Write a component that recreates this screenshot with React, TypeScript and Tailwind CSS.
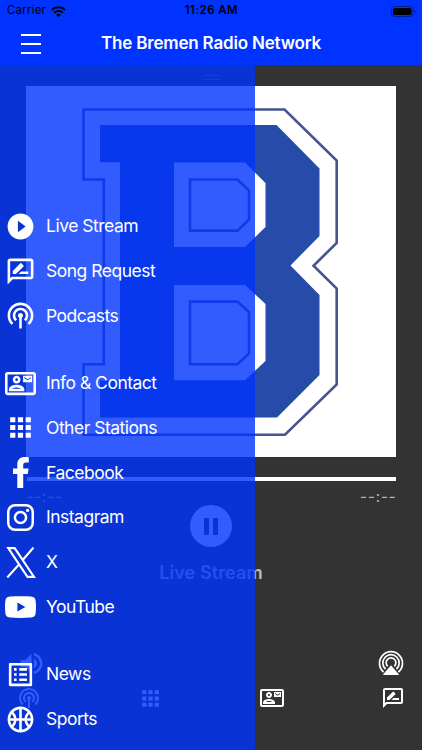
import type { ReactNode } from 'react';
import {
  MdApps,
  MdOutlineContactMail,
  MdOutlineListAlt,
  MdOutlineRateReview,
  MdOutlineSportsBasketball,
  MdPlayCircleFilled,
  MdPodcasts,
  MdVolumeUp,
} from 'react-icons/md';

interface MenuItem {
  label: string;
  icon: ReactNode;
}

function FacebookIcon() {
  return (
    <svg width="16" height="31" viewBox="0 0 16 31" fill="currentColor">
      <path d="M4.300 31V17H0v-5.600h4.300V7.600C4.300 2.600 7.300 0 11.600 0c2 0 3.700.15 4.200.2v5.300h-2.700c-2.300 0-2.900 1.100-2.900 2.700v3.200h5.400L14.700 17h-4.500v14z" />
    </svg>
  );
}

function InstagramIcon() {
  return (
    <svg width="27" height="27" viewBox="0 0 27 27" fill="none" stroke="currentColor" strokeWidth="2.500">
      <rect x="1.250" y="1.250" width="24.500" height="24.500" rx="6.800" />
      <circle cx="13.500" cy="13.500" r="5.600" />
      <circle cx="20.600" cy="6.400" r="1.700" fill="currentColor" stroke="none" />
    </svg>
  );
}

function XIcon() {
  return (
    <svg width="30" height="31" viewBox="0 0 30 31" fill="none" stroke="currentColor" strokeWidth="2.100">
      <path d="M2.200 1.100h6.500L28 29.900h-6.500z" />
      <path d="M27.500.5 16.700 13M13.200 17.200 1.300 30.500" />
    </svg>
  );
}

function YouTubeIcon() {
  return (
    <svg width="31" height="22" viewBox="0 0 31 22" fill="currentColor">
      <path
        fillRule="evenodd"
        d="M5 .5C12 0 19 0 26 .5c3.200.2 4.400 1.700 4.700 4.700.4 4 .4 7.600 0 11.600-.3 3-1.500 4.500-4.700 4.700-7 .5-14 .5-21 0C1.800 21.300.6 19.800.3 16.800c-.4-4-.4-7.600 0-11.600C.6 2.200 1.800.7 5 .5zM12.400 6.500v9l8-4.500z"
      />
    </svg>
  );
}

function AirPlayIcon() {
  return (
    <svg width="26" height="26" viewBox="0 0 26 26" fill="none" stroke="currentColor" strokeWidth="1.700">
      <path d="M5.600 22a11.500 11.500 0 1 1 14.800 0" />
      <path d="M7.500 19a8.200 8.200 0 1 1 11 0" />
      <path d="M9.600 16.300a4.900 4.900 0 1 1 6.800 0" />
      <path d="M13 15.300 20.800 24.300q.3.700-.5.700H5.700q-.8 0-.5-.7z" fill="currentColor" stroke="none" />
    </svg>
  );
}

function WifiIcon() {
  return (
    <svg width="15" height="11" viewBox="0 0 15 11" fill="none" stroke="currentColor" strokeWidth="2">
      <path d="M.8 4a9.600 9.600 0 0 1 13.400 0" />
      <path d="M3.200 6.700a6.200 6.200 0 0 1 8.600 0" />
      <path d="M7.500 11 5.200 8.700a3.300 3.300 0 0 1 4.600 0z" fill="currentColor" stroke="none" />
    </svg>
  );
}

function BatteryIcon() {
  return (
    <svg width="25" height="11" viewBox="0 0 25 11" fill="none">
      <rect x=".5" y=".5" width="21.500" height="10" rx="3" stroke="#000" strokeOpacity=".4" />
      <rect x="2" y="2" width="18.500" height="7" rx="1.700" fill="#000" />
      <path d="M23.300 3.800v3.400c.9-.3 1.200-1 1.200-1.700s-.3-1.400-1.200-1.700z" fill="#000" fillOpacity=".4" />
    </svg>
  );
}

// Block letter "B" station logo
function StationLogo() {
  return (
    <svg width="370" height="371" viewBox="26 86 370 371">
      <path
        fill="#264ba8"
        fillRule="evenodd"
        d="M100 125H276.500L319.500 168.500V236L290.500 265.500 319.500 295V375L277 417.500H100V380.500H120V162.200H100ZM174 162.500V247H245L265.500 227V183L245 162.500ZM174 285V380.300H245L265.500 361V304L245 285Z"
      />
      <g fill="none" stroke="#46558f" strokeWidth="2.600">
        <path d="M83.500 109.500H284.500L336.700 160.500V243L313.500 265.700 336.700 288.500V384.500L285 434.700H83.500V364.200H103.800V179.500H83.500Z" />
        <path d="M190 179.500H237.500L249 190.500V219.500L237.500 230.600H190Z" />
        <path d="M190 301.600H237.500L249 312V353.500L237.500 364.300H190Z" />
      </g>
    </svg>
  );
}

const menuGroups: MenuItem[][] = [
  [
    { label: 'Live Stream', icon: <MdPlayCircleFilled size={31} /> },
    { label: 'Song Request', icon: <MdOutlineRateReview size={31} /> },
    { label: 'Podcasts', icon: <MdPodcasts size={31} /> },
  ],
  [
    { label: 'Info & Contact', icon: <MdOutlineContactMail size={31} /> },
    { label: 'Other Stations', icon: <MdApps size={31} /> },
    { label: 'Facebook', icon: <FacebookIcon /> },
    { label: 'Instagram', icon: <InstagramIcon /> },
    { label: 'X', icon: <XIcon /> },
    { label: 'YouTube', icon: <YouTubeIcon /> },
  ],
  [
    { label: 'News', icon: <MdOutlineListAlt size={31} /> },
    { label: 'Sports', icon: <MdOutlineSportsBasketball size={31} /> },
  ],
];

function Header() {
  return (
    <header className="h-[65px] bg-[#0033ff]">
      <div className="grid h-[22px] grid-cols-3 items-center pl-[7px] pr-[6px] text-[11.500px] text-black">
        <div className="flex items-center gap-[5px]">
          <span className="tracking-[0.2px]">Carrier</span>
          <WifiIcon />
        </div>
        <span className="text-center font-semibold tracking-[0.450px]">11:26 AM</span>
        <div className="flex justify-end">
          <BatteryIcon />
        </div>
      </div>
      <div className="grid h-[43px] grid-cols-[80px_1fr_80px] items-center text-white">
        <div className="flex flex-col gap-[7px] pl-[21px]">
          <div className="h-[2px] w-[20px] bg-white" />
          <div className="h-[2px] w-[20px] bg-white" />
          <div className="h-[2px] w-[20px] bg-white" />
        </div>
        <h1 className="whitespace-nowrap text-center text-[17px] font-semibold tracking-[-0.180px]">The Bremen Radio Network</h1>
      </div>
    </header>
  );
}

function Player() {
  return (
    <main className="flex h-[685px] flex-col items-center bg-[#333333] text-white">
      <div className="flex h-[21px] flex-col gap-[3px] pt-[10px]">
        <div className="h-px w-[17px] bg-[#666666]" />
        <div className="h-px w-[17px] bg-[#666666]" />
      </div>
      <div className="bg-white">
        <StationLogo />
      </div>
      <div className="mt-[20px] h-[4px] w-[369px] bg-white" />
      <div className="mt-[7px] flex h-[18px] w-[369px] items-center justify-between text-[15px] tracking-[0.900px] text-[#bbbbbb]">
        <span>--:--</span>
        <span className="mr-[-1px]">--:--</span>
      </div>
      <div className="mt-[-1px] flex h-[42px] w-[42px] items-center justify-center gap-[4px] rounded-full bg-white">
        <div className="h-[17px] w-[5px] bg-[#333333]" />
        <div className="h-[17px] w-[5px] bg-[#333333]" />
      </div>
      <p className="mt-[12px] text-[18px] leading-[28px] font-semibold tracking-[0.100px] text-[#bbbbbb]">Live Stream</p>
      <div className="mt-[62px] flex h-[28px] w-full items-center justify-between pl-[17px] pr-[18px]">
        <MdVolumeUp size={29} />
        <AirPlayIcon />
      </div>
      <nav className="mt-[8px] flex h-[26px] w-full items-center justify-between px-[17px]">
        <MdPodcasts size={24} />
        <MdApps size={25} />
        <MdOutlineContactMail size={24} />
        <MdOutlineRateReview size={24} />
      </nav>
    </main>
  );
}

function Drawer() {
  return (
    <aside className="absolute top-[65px] bottom-0 left-0 w-[254.500px] bg-[#0033ff]/80 pt-[139px] text-white">
      <div className="flex flex-col gap-[22.400px]">
        {menuGroups.map((group, i) => (
          <ul key={i}>
            {group.map((item) => (
              <li key={item.label} className="flex h-[44.800px] items-center">
                <span className="flex w-[41px] justify-center">{item.icon}</span>
                <span className="pl-[5px] text-[17.500px] tracking-[-0.500px]">{item.label}</span>
              </li>
            ))}
          </ul>
        ))}
      </div>
    </aside>
  );
}

export default function App() {
  return (
    <div className="relative h-[750px] w-[422px] overflow-hidden font-['Inter',sans-serif]">
      <Header />
      <Player />
      <Drawer />
    </div>
  );
}
